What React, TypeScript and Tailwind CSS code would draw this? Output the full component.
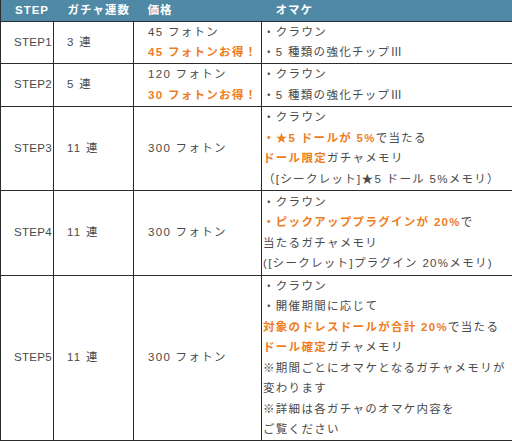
const font = { fontFamily: '"Liberation Sans", "Noto Sans CJK JP", sans-serif' };

const th = 'h-[21px] whitespace-nowrap border-b border-[#2b2b2b] px-[14px] text-left text-[11.5px] font-bold tracking-[1px] text-white';
const td = 'border-b border-r border-[#2b2b2b] align-middle text-[11.5px] text-[#4a4a4a]';
const orange = 'font-bold text-[#ee7d1e]';

type Row = {
  step: string;
  count: string;
  price: string;
  deal?: string;
  height: string;
  omake: React.ReactNode[];
};

const rows: Row[] = [
  {
    step: 'STEP1',
    count: '3 連',
    price: '45 フォトン',
    deal: '45 フォトンお得！',
    height: 'h-[41px]',
    omake: ['・クラウン', '・5 種類の強化チップⅢ'],
  },
  {
    step: 'STEP2',
    count: '5 連',
    price: '120 フォトン',
    deal: '30 フォトンお得！',
    height: 'h-[43px]',
    omake: ['・クラウン', '・5 種類の強化チップⅢ'],
  },
  {
    step: 'STEP3',
    count: '11 連',
    price: '300 フォトン',
    height: 'h-[84px]',
    omake: [
      '・クラウン',
      <>
        <span className={orange}>・★5 ドールが 5%</span>で当たる
      </>,
      <>
        <span className={orange}>ドール限定</span>ガチャメモリ
      </>,
      '（[シークレット]★5 ドール 5%メモリ）',
    ],
  },
  {
    step: 'STEP4',
    count: '11 連',
    price: '300 フォトン',
    height: 'h-[85px]',
    omake: [
      '・クラウン',
      <>
        <span className={orange}>・ピックアッププラグインが 20%</span>で
      </>,
      '当たるガチャメモリ',
      '([シークレット]プラグイン 20%メモリ)',
    ],
  },
  {
    step: 'STEP5',
    count: '11 連',
    price: '300 フォトン',
    height: 'h-[165px]',
    omake: [
      '・クラウン',
      '・開催期間に応じて',
      <>
        <span className={orange}>対象のドレスドールが合計 20%</span>で当たる
      </>,
      <>
        <span className={orange}>ドール確定</span>ガチャメモリ
      </>,
      '※期間ごとにオマケとなるガチャメモリが',
      '変わります',
      '※詳細は各ガチャのオマケ内容を',
      'ご覧ください',
    ],
  },
];

export default function App() {
  return (
    <div className="h-[442px] w-[512px] overflow-hidden bg-white" style={font}>
      <table className="w-[514px] table-fixed border-collapse border-l border-[#2b2b2b]">
        <colgroup>
          <col className="w-[53px]" />
          <col className="w-[80px]" />
          <col className="w-[128px]" />
          <col />
        </colgroup>
        <thead className="bg-[#4f89a5]">
          <tr>
            <th className={th}>STEP</th>
            <th className={th}>ガチャ連数</th>
            <th className={th}>価格</th>
            <th className={th}>オマケ</th>
          </tr>
        </thead>
        <tbody className="leading-[20.5px]">
          {rows.map((row) => (
            <tr key={row.step} className={row.height}>
              <td className={`${td} whitespace-nowrap pl-[13px] tracking-[0.3px]`}>{row.step}</td>
              <td className={`${td} pl-[13px] tracking-[1.3px]`}>{row.count}</td>
              <td className={`${td} pl-[14px] tracking-[1.3px]`}>
                <div>{row.price}</div>
                {row.deal ? <div className={orange}>{row.deal}</div> : null}
              </td>
              <td className={`${td} whitespace-nowrap pl-[1px] tracking-[1.3px]`}>
                {row.omake.map((line, index) => (
                  <div key={index}>{line}</div>
                ))}
              </td>
            </tr>
          ))}
        </tbody>
      </table>
    </div>
  );
}
